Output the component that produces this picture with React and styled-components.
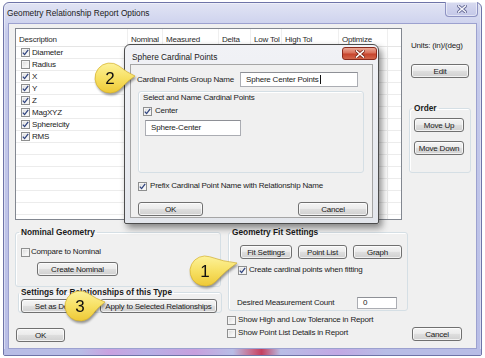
import React from "react";
import styled, { createGlobalStyle } from "styled-components";

const GlobalStyle = createGlobalStyle`
  html, body {
    margin: 0;
    padding: 0;
    background: #ffffff;
  }
  body {
    font-family: "Liberation Sans", Arial, sans-serif;
    font-size: 8px;
    letter-spacing: -0.2px;
    color: #1b1b1b;
  }
  *, *::before, *::after {
    box-sizing: border-box;
  }
`;

const Desktop = styled.div`
  position: relative;
  width: 485px;
  height: 358px;
  padding: 2px 0 0 3px;
  overflow: hidden;
`;

const Window = styled.div`
  width: 479px;
  height: 354px;
  display: flex;
  flex-direction: column;
  border: 1px solid #6e74a8;
  border-radius: 6px 6px 2px 2px;
  background: linear-gradient(#e1e4f4, #c6cbeb 30px, #b8bde6);
  box-shadow: inset 0 0 0 1px rgba(255, 255, 255, 0.45);
`;

const TitleBar = styled.div`
  height: 20px;
  display: flex;
  align-items: flex-start;
  justify-content: space-between;
  padding-left: 3px;
`;

const Title = styled.span`
  font-size: 8.3px;
  letter-spacing: 0;
  line-height: 10px;
  margin-top: 5px;
  color: #1a1a1a;
`;

const FrameClose = styled.div`
  width: 33px;
  height: 15px;
  margin: -1px 3px 0 0;
  display: flex;
  align-items: center;
  justify-content: center;
  border: 1px solid #8d92c2;
  border-top: none;
  border-radius: 0 0 4px 4px;
  background: linear-gradient(#d8dbf0, #c3c7e8);
  box-shadow: inset 0 0 0 1px rgba(255, 255, 255, 0.5);
`;

const Client = styled.div`
  flex: 1;
  margin: 0 4px;
  display: flex;
  flex-direction: column;
  padding: 4px 0 0 6px;
  border: 1px solid #9ca1cf;
  background: #f0f0f0;
`;

const BottomFrame = styled.div`
  height: 6px;
  background: linear-gradient(
    90deg,
    #b8bde6 0%,
    #b8bde6 16%,
    #c9a2e0 22%,
    #b7b0e6 30%,
    #c7a0de 40%,
    #b8bde6 48%,
    #c86a8a 52%,
    #c44060 54%,
    #b8bde6 58%,
    #c2a8e4 70%,
    #b8bde6 80%
  );
`;

const TopArea = styled.div`
  display: flex;
  height: 192px;
`;

const List = styled.div`
  width: 387px;
  height: 192px;
  border: 1px solid #828790;
  background: #ffffff;
  overflow: hidden;
`;

const columns = "112px 35px 56px 32px 31px 57px 49px 13px";

const HeaderRow = styled.div`
  display: grid;
  grid-template-columns: ${columns};
  height: 18px;
  border-bottom: 1px solid #e5e5e5;
`;

const HeaderCell = styled.div`
  padding: 6px 0 0 3px;
  line-height: 10px;
  white-space: nowrap;
  color: #2a2a2a;
  border-right: 1px solid ${(p) => (p.$last ? "transparent" : "#efefef")};
`;

const Row = styled.div`
  display: grid;
  grid-template-columns: ${columns};
  height: 12px;
  border-bottom: 1px solid #ececec;
`;

const Cell = styled.div`
  border-right: 1px solid ${(p) => (p.$last ? "transparent" : "#ececec")};
`;

const DescCell = styled.div`
  display: flex;
  align-items: center;
  gap: 2px;
  padding-left: 5px;
  line-height: 10px;
  white-space: nowrap;
  border-right: 1px solid #ececec;
`;

const Box = styled.span`
  width: 9px;
  height: 9px;
  flex: none;
  display: inline-flex;
  align-items: center;
  justify-content: center;
  border: 1px solid #8e8f8f;
  background: linear-gradient(135deg, #d8d8d8, #f6f6f6 70%, #ffffff);
  box-shadow: inset 0 0 0 1px #f4f4f4;
`;

const CheckLine = styled.div`
  display: flex;
  align-items: center;
  gap: ${(p) => p.$gap ?? 3}px;
  height: 10px;
  line-height: 10px;
  white-space: nowrap;
`;

const SidePanel = styled.div`
  width: 62px;
  margin-left: 7px;
  display: flex;
  flex-direction: column;
`;

const Units = styled.div`
  margin: 13px 0 0 2px;
  line-height: 10px;
  white-space: nowrap;
`;

const Button = styled.div`
  width: ${(p) => p.$w}px;
  height: 14px;
  flex: none;
  display: flex;
  align-items: center;
  justify-content: center;
  white-space: nowrap;
  border: 1px solid #707070;
  border-radius: 3px;
  color: #1a1a1a;
  background: linear-gradient(#f4f4f4 0%, #ececec 45%, #dedede 52%, #d0d0d0 100%);
  box-shadow: inset 0 0 0 1px rgba(255, 255, 255, 0.7);
`;

const GroupBox = styled.fieldset`
  margin: 0;
  min-width: 0;
  width: ${(p) => p.$w}px;
  height: ${(p) => p.$h}px;
  padding: 0;
  border: 1px solid #d5dfe5;
  border-radius: 3px;
  box-shadow: inset 1px 1px 0 #ffffff;
`;

const Legend = styled.legend`
  margin-left: ${(p) => p.$indent ?? 3}px;
  padding: 0 2px;
  font-size: 8.3px;
  font-weight: bold;
  letter-spacing: 0;
  line-height: 10px;
  white-space: nowrap;
  color: #1a1a1a;
`;

const OrderStack = styled.div`
  display: flex;
  flex-direction: column;
  gap: 9px;
  padding: 5px 0 0 4px;
`;

const BottomArea = styled.div`
  display: grid;
  grid-template-columns: 207px 242px;
  column-gap: 6px;
`;

const Column = styled.div`
  display: flex;
  flex-direction: column;
`;

const NominalBody = styled.div`
  display: flex;
  flex-direction: column;
  padding: 10px 0 0 5px;
  gap: 5px;
`;

const ButtonRow = styled.div`
  display: flex;
  gap: ${(p) => p.$gap}px;
  padding: ${(p) => p.$pad};
`;

const FitBody = styled.div`
  display: flex;
  flex-direction: column;
  padding: 8px 0 0 11px;
`;

const FieldLine = styled.div`
  display: flex;
  align-items: center;
  justify-content: space-between;
  height: 12px;
  margin: ${(p) => p.$m};
  line-height: 10px;
  white-space: nowrap;
`;

const TextBox = styled.div`
  width: ${(p) => p.$w}px;
  height: ${(p) => p.$h}px;
  flex: none;
  display: flex;
  align-items: center;
  padding-left: 5px;
  border: 1px solid #abadb3;
  border-top-color: #8e9096;
  background: #ffffff;
  color: #1b1b1b;
  white-space: nowrap;
`;

const Caret = styled.span`
  width: 1px;
  height: 9px;
  margin-left: 1px;
  background: #111111;
`;

const FooterRow = styled.div`
  display: flex;
  align-items: flex-end;
  justify-content: space-between;
  margin-top: 4px;
  padding-right: 8px;
`;

const CheckStack = styled.div`
  display: flex;
  flex-direction: column;
  gap: 3px;
  margin-left: -1px;
  padding-bottom: 3px;
`;

/* ---- sub dialog ---- */

const Dialog = styled.div`
  position: absolute;
  left: 124px;
  top: 44px;
  width: 255px;
  height: 180px;
  display: flex;
  flex-direction: column;
  border: 1px solid #4c4c4c;
  border-radius: 6px 6px 2px 2px;
  background: linear-gradient(#f1f2f6, #e3e6ec);
  box-shadow: 3px 4px 7px rgba(0, 0, 0, 0.45);
`;

const DialogTitleBar = styled.div`
  height: 19px;
  display: flex;
  align-items: flex-start;
  justify-content: space-between;
  padding-left: 7px;
`;

const DialogTitle = styled.span`
  margin-top: 7px;
  font-size: 8.3px;
  letter-spacing: 0;
  line-height: 10px;
  color: #1a1a1a;
`;

const RedClose = styled.div`
  width: 35px;
  height: 13px;
  margin: 2px 1px 0 0;
  display: flex;
  align-items: center;
  justify-content: center;
  border: 1px solid #8a2a1c;
  border-radius: 3px;
  background: linear-gradient(#eaa896 0%, #d9705a 45%, #c7432c 55%, #d2674c 100%);
`;

const DialogBody = styled.div`
  flex: 1;
  margin: 0 5px 5px;
  display: flex;
  flex-direction: column;
  border: 1px solid #a5a5a5;
  background: #f0f0f0;
`;

const NameRow = styled.div`
  display: grid;
  grid-template-columns: 103px 118px;
  align-items: center;
  margin: 7px 0 0 6px;
  line-height: 10px;
  white-space: nowrap;
`;

const PlainGroup = styled.div`
  width: 226px;
  height: 82px;
  margin: 4px 0 0 7px;
  padding: 1px 0 0 4px;
  display: flex;
  flex-direction: column;
  border: 1px solid #d5dfe5;
  border-radius: 3px;
  box-shadow: inset 1px 1px 0 #ffffff;
  line-height: 10px;
`;

const Spacer = styled.div`
  height: ${(p) => p.$h}px;
  flex: none;
`;

const DialogButtons = styled.div`
  display: flex;
  justify-content: space-between;
  padding: 0 4px 0 7px;
  margin-top: 11px;
`;

/* ---- callouts ---- */

const CalloutSvg = styled.svg`
  position: absolute;
  overflow: visible;
  filter: drop-shadow(1px 2px 1.2px rgba(0, 0, 0, 0.38));
`;

function Callout({ cx, cy, tx, ty, n }) {
  const r = 15;
  const pad = 20;
  const dx = tx - cx;
  const dy = ty - cy;
  const d = Math.hypot(dx, dy);
  const th = Math.atan2(dy, dx);
  const al = Math.acos(r / d) * 0.92;
  const pt = (a) => [pad + r * Math.cos(a), pad + r * Math.sin(a)];
  const [x1, y1] = pt(th - al);
  const [x2, y2] = pt(th + al);
  const tipX = pad + dx;
  const tipY = pad + dy;
  const ux = dx / d;
  const uy = dy / d;
  const ctrl = (px, py) => {
    const mx = (px + tipX) / 2;
    const my = (py + tipY) / 2;
    const proj = (mx - pad) * ux + (my - pad) * uy;
    const ax = pad + ux * proj;
    const ay = pad + uy * proj;
    return [mx + (ax - mx) * 0.3, my + (ay - my) * 0.3];
  };
  const [c2x, c2y] = ctrl(x2, y2);
  const [c1x, c1y] = ctrl(x1, y1);
  const path = `M${x1} ${y1} A${r} ${r} 0 1 0 ${x2} ${y2} Q${c2x} ${c2y} ${tipX} ${tipY} Q${c1x} ${c1y} ${x1} ${y1} Z`;
  const id = `bubble${n}`;
  return (
    <CalloutSvg
      width={pad + dx + 4}
      height={pad * 2}
      viewBox={`0 0 ${pad + dx + 4} ${pad * 2}`}
      style={{ left: cx - pad, top: cy - pad }}
    >
      <defs>
        <linearGradient id={id} x1="0" y1="0" x2="0" y2="1">
          <stop offset="0" stopColor="#fdf29a" />
          <stop offset="0.5" stopColor="#f7e064" />
          <stop offset="1" stopColor="#eec936" />
        </linearGradient>
      </defs>
      <path d={path} fill={`url(#${id})`} stroke="#d4b02c" strokeWidth="0.7" />
      <text
        x={pad}
        y={pad + 6}
        textAnchor="middle"
        fontFamily="Liberation Sans, Arial, sans-serif"
        fontSize="17"
        fill="#111"
        letterSpacing="0"
      >
        {n}
      </text>
    </CalloutSvg>
  );
}

const Check = ({ on }) => (
  <Box>
    {on && (
      <svg width="7" height="7" viewBox="0 0 7 7">
        <path d="M0.8 3.6 L2.6 5.6 L6.2 0.9" fill="none" stroke="#30447f" strokeWidth="1.3" />
      </svg>
    )}
  </Box>
);

const CloseGlyph = ({ fill, stroke }) => (
  <svg width="10" height="8" viewBox="0 0 10 8">
    <path d="M1.5 1 L8.5 7 M8.5 1 L1.5 7" stroke={stroke} strokeWidth="3.2" strokeLinecap="square" />
    <path d="M1.5 1 L8.5 7 M8.5 1 L1.5 7" stroke={fill} strokeWidth="1.6" strokeLinecap="square" />
  </svg>
);

const items = [
  ["Diameter", true],
  ["Radius", false],
  ["X", true],
  ["Y", true],
  ["Z", true],
  ["MagXYZ", true],
  ["Sphereicity", true],
  ["RMS", true],
];

const headers = ["Description", "Nominal", "Measured", "Delta", "Low Tol", "High Tol", "Optimize", ""];

export default function App() {
  const rows = [...items];
  while (rows.length < 15) rows.push(null);

  return (
    <>
      <GlobalStyle />
      <Desktop>
        <Window>
          <TitleBar>
            <Title>Geometry Relationship Report Options</Title>
            <FrameClose>
              <CloseGlyph fill="#f4f4fa" stroke="#5e6390" />
            </FrameClose>
          </TitleBar>
          <Client>
            <TopArea>
              <List>
                <HeaderRow>
                  {headers.map((h, i) => (
                    <HeaderCell key={i} $last={i === headers.length - 1}>
                      {h}
                    </HeaderCell>
                  ))}
                </HeaderRow>
                {rows.map((r, i) => (
                  <Row key={i}>
                    {r ? (
                      <DescCell>
                        <Check on={r[1]} />
                        {r[0]}
                      </DescCell>
                    ) : (
                      <Cell />
                    )}
                    {headers.slice(1).map((_, j) => (
                      <Cell key={j} $last={j === headers.length - 2} />
                    ))}
                  </Row>
                ))}
              </List>
              <SidePanel>
                <Units>Units: (in)/(deg)</Units>
                <Spacer $h={13} />
                <ButtonRow $gap={0} $pad="0 0 0 2px">
                  <Button $w={58}>Edit</Button>
                </ButtonRow>
                <Spacer $h={25} />
                <GroupBox $w={62} $h={70}>
                  <Legend $indent={2}>Order</Legend>
                  <OrderStack>
                    <Button $w={50}>Move Up</Button>
                    <Button $w={50}>Move Down</Button>
                  </OrderStack>
                </GroupBox>
              </SidePanel>
            </TopArea>

            <BottomArea>
              <Column>
                <Spacer $h={7} />
                <GroupBox $w={206} $h={60}>
                  <Legend $indent={3}>Nominal Geometry</Legend>
                  <NominalBody>
                    <CheckLine $gap={1}>
                      <Check on={false} />
                      Compare to Nominal
                    </CheckLine>
                    <ButtonRow $gap={0} $pad="0 0 0 16px">
                      <Button $w={81}>Create Nominal</Button>
                    </ButtonRow>
                  </NominalBody>
                </GroupBox>
                <ButtonRow $gap={0} $pad="0 0 0 3px">
                  <GroupBox $w={204} $h={26}>
                    <Legend $indent={0}>Settings for Relationships of this Type</Legend>
                    <ButtonRow $gap={4} $pad="2px 0 0 2px">
                      <Button $w={75}>Set as Default</Button>
                      <Button $w={117}>Apply to Selected Relationships</Button>
                    </ButtonRow>
                  </GroupBox>
                </ButtonRow>
                <ButtonRow $gap={0} $pad="15px 0 0 1px">
                  <Button $w={49}>OK</Button>
                </ButtonRow>
              </Column>

              <Column>
                <Spacer $h={7} />
                <GroupBox $w={180} $h={84}>
                  <Legend $indent={1}>Geometry Fit Settings</Legend>
                  <FitBody>
                    <ButtonRow $gap={6} $pad="0">
                      <Button $w={52}>Fit Settings</Button>
                      <Button $w={49}>Point List</Button>
                      <Button $w={49}>Graph</Button>
                    </ButtonRow>
                    <FieldLine $m="5px 0 0 -2px">
                      <CheckLine $gap={2}>
                        <Check on />
                        Create cardinal points when fitting
                      </CheckLine>
                    </FieldLine>
                    <FieldLine $m="21px 10px 0 -3px">
                      Desired Measurement Count
                      <TextBox $w={40} $h={12}>0</TextBox>
                    </FieldLine>
                  </FitBody>
                </GroupBox>
                <FooterRow>
                  <CheckStack>
                    <CheckLine $gap={2}>
                      <Check on={false} />
                      Show High and Low Tolerance in Report
                    </CheckLine>
                    <CheckLine $gap={2}>
                      <Check on={false} />
                      Show Point List Details in Report
                    </CheckLine>
                  </CheckStack>
                  <Button $w={50}>Cancel</Button>
                </FooterRow>
              </Column>
            </BottomArea>
          </Client>
          <BottomFrame />
        </Window>

        <Dialog>
          <DialogTitleBar>
            <DialogTitle>Sphere Cardinal Points</DialogTitle>
            <RedClose>
              <CloseGlyph fill="#ffffff" stroke="#7a2416" />
            </RedClose>
          </DialogTitleBar>
          <DialogBody>
            <NameRow>
              Cardinal Points Group Name
              <TextBox $w={118} $h={15}>
                Sphere Center Points
                <Caret />
              </TextBox>
            </NameRow>
            <PlainGroup>
              Select and Name Cardinal Points
              <Spacer $h={3} />
              <CheckLine $gap={3}>
                <Check on />
                Center
              </CheckLine>
              <Spacer $h={4} />
              <ButtonRow $gap={0} $pad="0 0 0 2px">
                <TextBox $w={96} $h={16}>Sphere-Center</TextBox>
              </ButtonRow>
            </PlainGroup>
            <Spacer $h={8} />
            <ButtonRow $gap={0} $pad="0 0 0 7px">
              <CheckLine $gap={3}>
                <Check on />
                Prefix Cardinal Point Name with Relationship Name
              </CheckLine>
            </ButtonRow>
            <DialogButtons>
              <Button $w={65}>OK</Button>
              <Button $w={70}>Cancel</Button>
            </DialogButtons>
          </DialogBody>
        </Dialog>

        <Callout cx={110} cy={78} tx={135} ty={76} n="2" />
        <Callout cx={205} cy={271} tx={237} ty={263} n="1" />
        <Callout cx={80} cy={306} tx={105} ty={302} n="3" />
      </Desktop>
    </>
  );
}
